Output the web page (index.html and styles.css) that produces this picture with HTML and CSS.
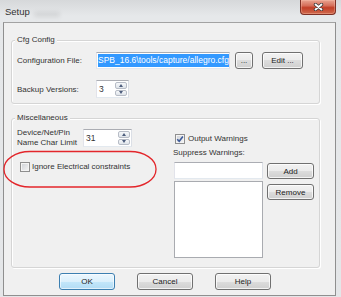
FILE: index.html
```html
<!DOCTYPE html>
<html lang="en">
<head>
    <meta charset="UTF-8">
    <title>Setup</title>
    <link rel="stylesheet" href="styles.css">
</head>
<body>
    <div class="window">
        <div class="titlebar">
            <div class="title">Setup</div>
            <div class="ghost"></div>
            <div class="close-btn">
                <svg width="11" height="8" viewBox="0 0 11 8">
                    <path d="M2.5 1.5 L8.5 6.5 M8.5 1.5 L2.5 6.5" stroke="#3a3a3a" stroke-width="3.4" stroke-linecap="round" fill="none"/>
                    <path d="M2.5 1.5 L8.5 6.5 M8.5 1.5 L2.5 6.5" stroke="#fff" stroke-width="1.8" stroke-linecap="round" fill="none"/>
                </svg>
            </div>
        </div>

        <div class="client">
            <fieldset class="group cfg">
                <legend>Cfg Config</legend>
                <div class="row">
                    <label class="lbl lbl-cfg">Configuration File:</label>
                    <div class="textbox file-box"><span class="sel">SPB_16.6\tools/capture/allegro.cfg</span></div>
                    <button class="btn btn-browse">...</button>
                    <button class="btn btn-edit">Edit ...</button>
                </div>
                <div class="row row-backup">
                    <label class="lbl lbl-cfg">Backup Versions:</label>
                    <div class="spin spin-backup">
                        <div class="spin-val">3</div>
                        <div class="spin-arrows"><span class="arr up"></span><span class="arr down"></span></div>
                    </div>
                </div>
            </fieldset>

            <fieldset class="group misc">
                <legend>Miscellaneous</legend>
                <div class="misc-cols">
                    <div class="misc-left">
                        <div class="row">
                            <label class="lbl lbl-two">Device/Net/Pin<br>Name Char Limit</label>
                            <div class="spin spin-limit">
                                <div class="spin-val">31</div>
                                <div class="spin-arrows"><span class="arr up"></span><span class="arr down"></span></div>
                            </div>
                        </div>
                        <div class="check-row ignore">
                            <span class="check"></span>
                            <span>Ignore Electrical constraints</span>
                        </div>
                    </div>
                    <div class="misc-right">
                        <div class="check-row output">
                            <span class="check">
                                <svg width="8" height="8" viewBox="0 0 8 8"><path d="M1.2 4.2 L3.2 6.3 L6.9 1.4" stroke="#3c5a9a" stroke-width="1.6" fill="none"/></svg>
                            </span>
                            <span>Output Warnings</span>
                        </div>
                        <div class="lbl suppress">Suppress Warnings:</div>
                        <div class="suppress-grid">
                            <div class="textbox warn-box"></div>
                            <button class="btn btn-add">Add</button>
                            <div class="listbox"></div>
                            <button class="btn btn-remove">Remove</button>
                        </div>
                    </div>
                </div>
            </fieldset>

            <div class="dlg-buttons">
                <button class="btn btn-dlg btn-default">OK</button>
                <button class="btn btn-dlg">Cancel</button>
                <button class="btn btn-dlg">Help</button>
            </div>
        </div>

        <svg class="annotation" width="156" height="40" viewBox="0 0 156 40">
            <rect x="1" y="1.5" width="152" height="35.5" rx="26" ry="17.5" fill="none" stroke="#e3262b" stroke-width="1.3"/>
        </svg>
    </div>
</body>
</html>
```

FILE: styles.css
```css
body {
    margin: 0;
    font-family: 'Liberation Sans', Arial, sans-serif;
    font-size: 8px;
    color: #333;
}
.window {
    position: relative;
    width: 341px;
    height: 297px;
    display: flex;
    flex-direction: column;
    overflow: hidden;
    background: linear-gradient(to bottom, #d6d8da 0, #e6e8ea 16px, #e4e6e8 100%);
}
.titlebar {
    height: 22px;
    flex: none;
    display: flex;
    align-items: flex-start;
    padding: 0 5px;
    box-sizing: border-box;
}
.title {
    font-size: 9.5px;
    line-height: 12px;
    padding-top: 6px;
    color: #333;
}
.ghost {
    width: 26px;
    height: 5px;
    margin: 12px 0 0 4px;
    border-radius: 3px;
    background: rgba(0,0,0,0.08);
    filter: blur(2px);
}
.close-btn {
    margin-left: auto;
    width: 36px;
    height: 15px;
    box-sizing: border-box;
    border: 1px solid #7d3025;
    border-top: none;
    border-radius: 0 0 4px 4px;
    background: linear-gradient(to bottom, #e9a491 0, #d66f5a 40%, #c23f27 55%, #cf6a4e 100%);
    box-shadow: inset 0 0 0 1px rgba(255,200,180,0.35);
    display: flex;
    justify-content: center;
    align-items: center;
}
.client {
    flex: 1;
    margin: 0 5px 1px 3px;
    border: 1px solid #8f8f8f;
    border-top-color: #a2a2a2;
    background: #f0f0f0;
    padding: 12px 7px 0;
}
.group {
    margin: 0;
    width: 309px;
    min-width: 0;
    box-sizing: border-box;
    border: 1px solid #d5d5d5;
    border-radius: 3px;
    padding: 7px 5px 5px;
    box-shadow: inset 1px 1px 0 #fff, 1px 1px 0 #fff;
}
.group legend {
    padding: 0 2px;
    margin-left: -2px;
    line-height: 10px;
    background: #f0f0f0;
}
.misc {
    margin-top: 9px;
    padding-top: 5px;
    padding-bottom: 9px;
}
.row {
    display: flex;
    align-items: center;
}
.cfg .row {
    height: 17px;
}
.cfg .row-backup {
    margin-top: 11px;
    height: 18px;
}
.lbl-cfg {
    width: 79px;
    flex: none;
}
.lbl-two {
    width: 66px;
    flex: none;
    line-height: 10px;
}
.textbox {
    box-sizing: border-box;
    background: #fff;
    border: 1px solid;
    border-color: #abadb3 #dbdfe6 #e3e9ef #e2e3ea;
}
.file-box {
    width: 134px;
    height: 17px;
    padding-left: 1px;
    overflow: hidden;
    white-space: nowrap;
    font-size: 8.5px;
}
.sel {
    display: inline-block;
    height: 13px;
    line-height: 13px;
    margin-top: 1px;
    background: #3399ff;
    color: #fff;
}
.btn {
    box-sizing: border-box;
    height: 17px;
    padding: 0;
    margin: 0;
    font: inherit;
    color: #222;
    border: 1px solid #707070;
    border-radius: 3px;
    background: linear-gradient(to bottom, #f2f2f2 0, #ebebeb 50%, #dddddd 50%, #cfcfcf 100%);
    box-shadow: inset 0 0 0 1px rgba(255,255,255,0.75);
}
.btn-browse {
    width: 18px;
    margin-left: 5px;
}
.btn-edit {
    width: 41px;
    margin-left: 9px;
}
.spin {
    box-sizing: border-box;
    height: 18px;
    display: flex;
    background: #fff;
    border: 1px solid;
    border-color: #abadb3 #dbdfe6 #e3e9ef #e2e3ea;
}
.spin-backup {
    width: 33px;
}
.spin-limit {
    width: 49px;
}
.spin-val {
    flex: 1;
    padding-left: 2px;
    line-height: 16px;
    font-size: 8.5px;
}
.spin-arrows {
    width: 12px;
    display: flex;
    flex-direction: column;
    gap: 1px;
    padding: 1px 1px 1px 0;
}
.arr {
    flex: 1;
    display: flex;
    justify-content: center;
    align-items: center;
    border: 1px solid #b7bcc6;
    border-radius: 2px;
    background: linear-gradient(to bottom, #f6f8fa, #dfe4ea);
}
.arr::after {
    content: '';
    border-left: 2.5px solid transparent;
    border-right: 2.5px solid transparent;
}
.up::after {
    border-bottom: 3px solid #4d5d7c;
}
.down::after {
    border-top: 3px solid #4d5d7c;
}
.misc-cols {
    display: flex;
}
.misc-left {
    width: 157px;
    flex: none;
}
.misc-left .row {
    height: 20px;
}
.check-row {
    display: flex;
    align-items: center;
    height: 10px;
    line-height: 10px;
}
.check {
    width: 10px;
    height: 10px;
    box-sizing: border-box;
    flex: none;
    border: 1px solid #8f8f8f;
    background: linear-gradient(135deg, #cdd0d5, #f6f6f6);
    box-shadow: inset 0 0 0 1px #f4f4f4;
    display: flex;
    justify-content: center;
    align-items: center;
}
.ignore {
    margin-top: 14px;
}
.ignore .check {
    margin: 0 2px 0 3px;
}
.misc-right {
    margin-top: 6px;
}
.output .check {
    margin: 0 3px 0 1px;
}
.suppress {
    margin: 4px 0 0 -1px;
    line-height: 10px;
}
.suppress-grid {
    display: grid;
    grid-template-columns: 89px 47px;
    grid-template-rows: 17px 77px;
    column-gap: 4px;
    row-gap: 2px;
    margin-top: 4px;
}
.warn-box {
    height: 17px;
}
.btn-add {
    height: 16px;
    align-self: end;
}
.listbox {
    box-sizing: border-box;
    background: #fff;
    border: 1px solid #a9abb0;
}
.btn-remove {
    height: 16px;
    align-self: start;
    margin-top: 3px;
}
.dlg-buttons {
    display: flex;
    gap: 22px;
    margin-top: 5px;
    padding-left: 48px;
}
.btn-dlg {
    width: 56px;
}
.btn-default {
    border-color: #3c7fb1;
    background: linear-gradient(to bottom, #ecf7fe 0, #dbf0fc 50%, #c4e7fa 50%, #b2dcf5 100%);
    box-shadow: inset 0 0 0 1px rgba(255,255,255,0.6);
}
.annotation {
    position: absolute;
    left: 3px;
    top: 150px;
}
```
